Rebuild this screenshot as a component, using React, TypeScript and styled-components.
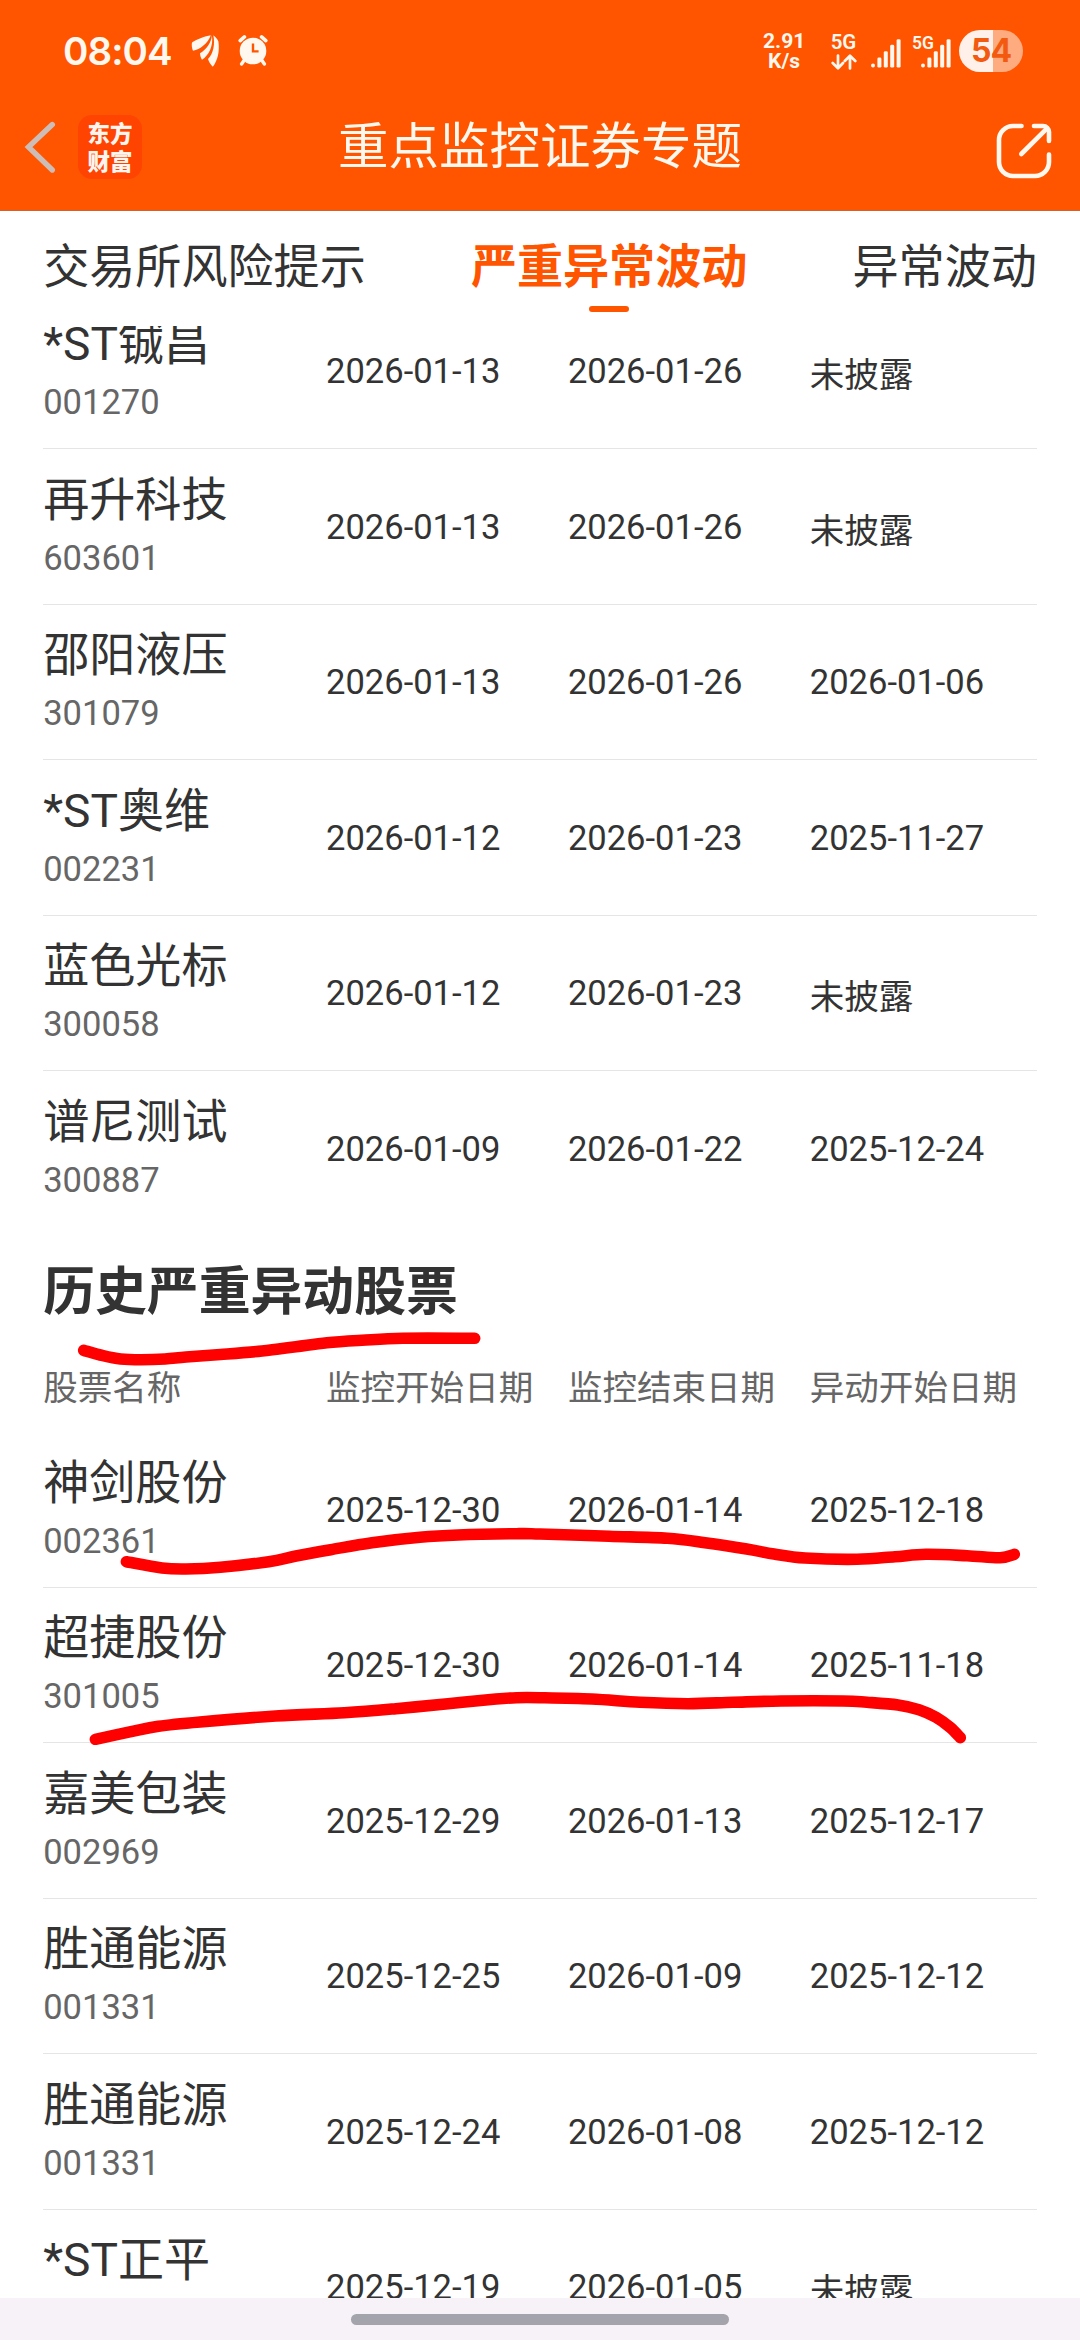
import React from "react";
import styled, { createGlobalStyle } from "styled-components";

const ORANGE = "#ff5500";
const INK = "#333333";
const MUTED = "#666666";

const GlobalStyle = createGlobalStyle`
  * { box-sizing: border-box; }
  body {
    margin: 0;
    background: #fff;
    font-family: Roboto, "Noto Sans CJK SC", sans-serif;
    color: ${INK};
  }
`;

const Screen = styled.div`
  position: relative;
  width: 1080px;
  height: 2340px;
  display: flex;
  flex-direction: column;
  overflow: hidden;
  background: #fff;
`;

const Header = styled.header`
  flex: none;
  height: 211px;
  background: ${ORANGE};
  border-bottom: 1px solid #cf6330;
  color: #fff8ee;
`;

const StatusBar = styled.div`
  height: 100px;
  padding: 1px 57px 0 63px;
  display: flex;
  justify-content: space-between;
  align-items: center;
`;

const StatusGroup = styled.div`
  display: flex;
  align-items: center;
`;

const Clock = styled.span`
  width: 128px;
  font: 600 38.5px/44px Inter, sans-serif;
  letter-spacing: -0.9px;
`;

const StatusIcon = styled.svg<{ $gap?: number }>`
  display: block;
  flex: none;
  margin-right: ${(p) => p.$gap ?? 0}px;
`;

const Speed = styled.div`
  width: 42px;
  margin-right: 25px;
  font-weight: 700;
  font-size: 21px;
  line-height: 20px;
  text-align: center;
  white-space: nowrap;
`;

const Network = styled.div`
  width: 27px;
  margin-right: 14px;
  padding-top: 1px;
  display: flex;
  flex-direction: column;
  align-items: center;
  gap: 2px;
`;

const NetworkLabel = styled.span`
  font-weight: 600;
  font-size: 20.5px;
  line-height: 20px;
`;

const SignalSlot = styled.div<{ $gap: number }>`
  position: relative;
  margin: 5px ${(p) => p.$gap}px 0 0;
`;

const SignalTag = styled.span`
  position: absolute;
  left: -9px;
  top: -6px;
  font-weight: 600;
  font-size: 17.5px;
  line-height: 20px;
`;

const Battery = styled.div`
  width: 64px;
  height: 42px;
  border-radius: 21px;
  background: linear-gradient(90deg, #fff1ea 0 53%, #ffab80 53%);
  color: #f25a10;
  font: 700 32px/42px Inter, sans-serif;
  letter-spacing: -1px;
  text-align: center;
`;

const NavBar = styled.div`
  height: 94px;
  padding: 0 26px 0 23px;
  display: grid;
  grid-template-columns: 200px 1fr 200px;
  align-items: center;
`;

const NavLeft = styled.div`
  display: flex;
  align-items: center;
  gap: 20px;
`;

const NavRight = styled.div`
  display: flex;
  justify-content: flex-end;
  padding-top: 8px;
`;

const Logo = styled.div`
  width: 64px;
  height: 64px;
  padding-top: 4px;
  border-radius: 14px;
  background: #ff4300;
  font-family: "Noto Sans CJK SC", sans-serif;
  font-weight: 900;
  font-size: 22.5px;
  line-height: 27.5px;
  text-align: center;
  color: #fff4ee;
`;

const Title = styled.h1`
  margin: 0 0 0 3px;
  font-weight: 400;
  font-size: 50.5px;
  line-height: 60px;
  text-align: center;
  white-space: nowrap;
`;

const Tabs = styled.nav`
  flex: none;
  height: 115px;
  padding: 26px 43.2px 0;
  display: flex;
  justify-content: space-between;
  align-items: flex-start;
`;

const Tab = styled.div<{ $active?: boolean }>`
  display: flex;
  flex-direction: column;
  align-items: center;
  gap: 9px;
  font-size: 46.08px;
  line-height: 60px;
  font-weight: ${(p) => (p.$active ? 700 : 400)};
  color: ${(p) => (p.$active ? ORANGE : INK)};
`;

const TabMark = styled.span`
  width: 40px;
  height: 6px;
  border-radius: 3px;
  background: ${ORANGE};
`;

const Viewport = styled.main`
  flex: 1;
  min-height: 0;
  overflow: hidden;
`;

const Scrolled = styled.div`
  margin-top: -32.4px;
  padding: 0 43.2px;
`;

const columns = "282.8px 241.9px 241.9px 1fr";

const Row = styled.div<{ $last?: boolean }>`
  height: 155.52px;
  display: grid;
  grid-template-columns: ${columns};
  align-items: center;
  border-bottom: 1px solid ${(p) => (p.$last ? "transparent" : "#e5e5e5")};
`;

const Stock = styled.div`
  display: flex;
  flex-direction: column;
  gap: 11px;
  padding-bottom: 2px;
`;

const StockName = styled.span`
  font-size: 46.08px;
  line-height: 54px;
  white-space: nowrap;
`;

const StockCode = styled.span`
  font-size: 34.56px;
  line-height: 40px;
  color: ${MUTED};
`;

const Cell = styled.span<{ $text?: boolean }>`
  padding-top: ${(p) => (p.$text ? 9 : 0.6)}px;
  font-size: 34.56px;
  line-height: 40px;
  white-space: nowrap;
`;

const SectionTitle = styled.h2`
  margin: 0;
  padding-top: 36px;
  font-weight: 700;
  font-size: 51.84px;
  line-height: 60px;
`;

const ColumnHeads = styled.div`
  height: 109.4px;
  padding-top: 45px;
  display: grid;
  grid-template-columns: ${columns};
  font-size: 34.56px;
  line-height: 40px;
  color: ${MUTED};
  white-space: nowrap;
`;

const GestureBar = styled.footer`
  flex: none;
  height: 42px;
  padding-top: 16px;
  display: flex;
  justify-content: center;
  background: #f6f2f7;
`;

const GesturePill = styled.span`
  width: 378px;
  height: 11px;
  border-radius: 5.5px;
  background: #a4a4ac;
`;

const Ink = styled.svg`
  position: absolute;
  left: 0;
  top: 0;
  pointer-events: none;
`;

type Record4 = [string, string, string, string, string];

const current: Record4[] = [
  ["*ST铖昌", "001270", "2026-01-13", "2026-01-26", "未披露"],
  ["再升科技", "603601", "2026-01-13", "2026-01-26", "未披露"],
  ["邵阳液压", "301079", "2026-01-13", "2026-01-26", "2026-01-06"],
  ["*ST奥维", "002231", "2026-01-12", "2026-01-23", "2025-11-27"],
  ["蓝色光标", "300058", "2026-01-12", "2026-01-23", "未披露"],
  ["谱尼测试", "300887", "2026-01-09", "2026-01-22", "2025-12-24"],
];

const history: Record4[] = [
  ["神剑股份", "002361", "2025-12-30", "2026-01-14", "2025-12-18"],
  ["超捷股份", "301005", "2025-12-30", "2026-01-14", "2025-11-18"],
  ["嘉美包装", "002969", "2025-12-29", "2026-01-13", "2025-12-17"],
  ["胜通能源", "001331", "2025-12-25", "2026-01-09", "2025-12-12"],
  ["胜通能源", "001331", "2025-12-24", "2026-01-08", "2025-12-12"],
  ["*ST正平", "", "2025-12-19", "2026-01-05", "未披露"],
];

type Point = [number, number];

const strokes: Point[][] = [
  [[83.7, 1350.3], [103, 1355.7], [120.6, 1359], [141, 1359.8], [165, 1359], [186, 1357], [220.5, 1354.5], [262, 1351], [296, 1346.7], [327, 1342.7], [362, 1340.3], [403, 1338.3], [474.7, 1338.3]],
  [[126.4, 1561.7], [162, 1568], [186, 1569], [220.5, 1567.3], [268.7, 1561.7], [296, 1556], [330.7, 1549.7], [372, 1542.7], [420, 1537.3], [458, 1535], [516.7, 1533.7], [540, 1534], [609, 1536.3], [667.5, 1538.3], [705, 1542.7], [746.7, 1549], [774, 1554], [805, 1558], [857, 1559.3], [895, 1556.7], [926, 1554.3], [967, 1555.7], [1000, 1557.7], [1014.3, 1554.3]],
  [[95.4, 1739.3], [131, 1731.7], [158.5, 1726.3], [200, 1722], [275.6, 1716], [344.5, 1712.7], [396, 1708.7], [448, 1703.7], [496, 1699], [516.7, 1697.7], [540, 1697.7], [591.7, 1699], [640, 1702.3], [688, 1703.7], [733, 1702.3], [781, 1701], [843, 1701], [867, 1702.3], [898, 1705], [919, 1709.7], [936, 1717.3], [950, 1727.3], [960.3, 1737.7]],
];

// Smooth curve through all points (Catmull-Rom converted to Béziers).
function smooth(points: Point[]): string {
  let d = `M${points[0][0]} ${points[0][1]}`;
  for (let i = 0; i < points.length - 1; i++) {
    const a = points[i - 1] ?? points[i];
    const b = points[i];
    const c = points[i + 1];
    const e = points[i + 2] ?? c;
    d += ` C${b[0] + (c[0] - a[0]) / 6} ${b[1] + (c[1] - a[1]) / 6} ${c[0] - (e[0] - b[0]) / 6} ${c[1] - (e[1] - b[1]) / 6} ${c[0]} ${c[1]}`;
  }
  return d;
}

const WingIcon = () => (
  <StatusIcon $gap={18} width="29" height="34" viewBox="0 0 29 34" fill="currentColor">
    <path d="M19.8 1.3C14 2.3 6 5 1 8.5C0.5 11 0.8 14 2 16.8C9 15.5 16.8 9.5 19.8 1.3Z" />
    <path d="M20.9 1.3C20.4 8.5 15.6 15.4 9 19.3C9.2 22 9.8 24 11 25.8C17.8 21.5 22.6 12 20.9 1.3Z" />
    <path d="M22.3 1.3C24.8 3.3 26.5 5.3 27.4 7.5C28.7 17 27 26 21.8 32.8C19.6 30.5 18 28 17 25C22.5 19.5 24.2 10 22.3 1.3Z" />
  </StatusIcon>
);

const AlarmIcon = () => (
  <StatusIcon width="30" height="33" viewBox="0 0 30 33" fill="none" stroke="currentColor" strokeLinecap="round">
    <circle cx="15" cy="17" r="13.3" fill="currentColor" stroke="none" />
    <path d="M2.2 6.6L6.4 2.9M27.8 6.6L23.6 2.9" strokeWidth="3.6" />
    <path d="M6 26.5L3.6 30M24 26.5L26.4 30" strokeWidth="3.4" />
    <path d="M15 9.5V17.4H20.6" stroke={ORANGE} strokeWidth="2.4" strokeLinecap="butt" />
  </StatusIcon>
);

const Signal = () => (
  <StatusIcon width="30" height="29" viewBox="0 0 30 29" fill="currentColor">
    <rect x="0" y="24.6" width="4" height="4" rx="2" />
    <rect x="6.4" y="18.6" width="4" height="10" rx="1.4" />
    <rect x="12.8" y="12.2" width="4" height="16.4" rx="1.4" />
    <rect x="19.2" y="5.8" width="4" height="22.8" rx="1.4" />
    <rect x="25.6" y="0.2" width="4" height="28.4" rx="1.4" />
  </StatusIcon>
);

const DataArrows = () => (
  <svg width="26" height="16" viewBox="0 0 26 16" fill="none" stroke="currentColor" strokeWidth="2.7" strokeLinecap="round" strokeLinejoin="round">
    <path d="M7 1.5V14M1.7 9L7 14.2L12 9" />
    <path d="M19 14.5V2M13.8 7L19 1.8L24.3 7" />
  </svg>
);

const BackIcon = () => (
  <svg width="35" height="54" viewBox="0 0 35 54" fill="none" stroke="#cdbdb6" strokeWidth="5.4" strokeLinecap="round">
    <path d="M29.3 4.5L5.5 27L29.3 50" strokeLinejoin="miter" />
  </svg>
);

const ShareIcon = () => (
  <svg width="60" height="60" viewBox="994 121 60 60" fill="none" stroke="currentColor" strokeWidth="4.6" strokeLinecap="round" strokeLinejoin="round">
    <path d="M1021.5 126H1013A14 14 0 0 0 999 140V162A14 14 0 0 0 1013 176H1035A14 14 0 0 0 1049 162V154.5" />
    <path d="M1034 126H1043A6 6 0 0 1 1049 132V141" />
    <path d="M1021.3 154L1047 128.3" />
  </svg>
);

const StockRow = ({ record, last }: { record: Record4; last?: boolean }) => {
  const [name, code, ...dates] = record;
  return (
    <Row $last={last}>
      <Stock>
        <StockName>{name}</StockName>
        <StockCode>{code || "\u00a0"}</StockCode>
      </Stock>
      {dates.map((value, i) => (
        <Cell key={i} $text={value === "未披露"}>{value}</Cell>
      ))}
    </Row>
  );
};

export default function App() {
  return (
    <Screen>
      <GlobalStyle />
      <Header>
        <StatusBar>
          <StatusGroup>
            <Clock>08:04</Clock>
            <WingIcon />
            <AlarmIcon />
          </StatusGroup>
          <StatusGroup>
            <Speed>2.91<br />K/s</Speed>
            <Network>
              <NetworkLabel>5G</NetworkLabel>
              <DataArrows />
            </Network>
            <SignalSlot $gap={20}><Signal /></SignalSlot>
            <SignalSlot $gap={8}>
              <SignalTag>5G</SignalTag>
              <Signal />
            </SignalSlot>
            <Battery>54</Battery>
          </StatusGroup>
        </StatusBar>
        <NavBar>
          <NavLeft>
            <BackIcon />
            <Logo>东方<br />财富</Logo>
          </NavLeft>
          <Title>重点监控证券专题</Title>
          <NavRight><ShareIcon /></NavRight>
        </NavBar>
      </Header>
      <Tabs>
        <Tab>交易所风险提示</Tab>
        <Tab $active>严重异常波动<TabMark /></Tab>
        <Tab>异常波动</Tab>
      </Tabs>
      <Viewport>
        <Scrolled>
          {current.map((r, i) => (
            <StockRow key={i} record={r} last={i === current.length - 1} />
          ))}
          <SectionTitle>历史严重异动股票</SectionTitle>
          <ColumnHeads>
            <span>股票名称</span>
            <span>监控开始日期</span>
            <span>监控结束日期</span>
            <span>异动开始日期</span>
          </ColumnHeads>
          {history.map((r, i) => (
            <StockRow key={i} record={r} />
          ))}
        </Scrolled>
      </Viewport>
      <GestureBar><GesturePill /></GestureBar>
      <Ink width="1080" height="2340" viewBox="0 0 1080 2340" fill="none" stroke="#ff0000" strokeWidth="11.6" strokeLinecap="round" strokeLinejoin="round">
        {strokes.map((s, i) => (
          <path key={i} d={smooth(s)} />
        ))}
      </Ink>
    </Screen>
  );
}
